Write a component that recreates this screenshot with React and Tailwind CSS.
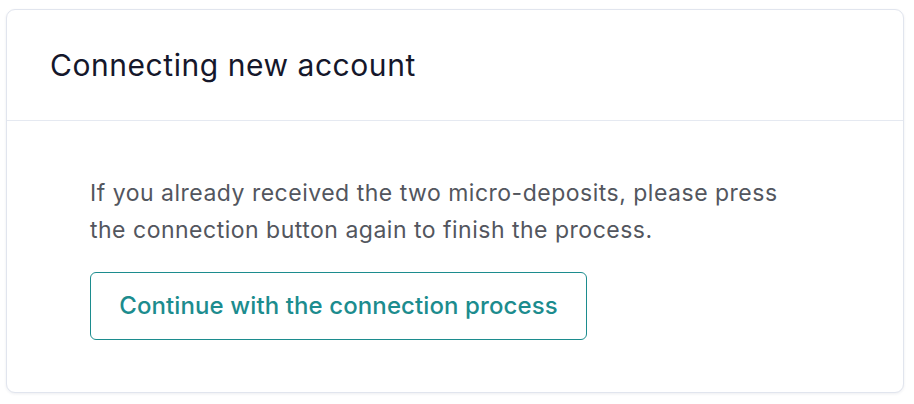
import React from "react";

export default function App() {
  return (
    <div
      className="min-h-[404px] w-full bg-white pl-[6px] pr-[10px] pt-[9px]"
      style={{ fontFamily: "Inter, 'Noto Sans', sans-serif" }}
    >
      <div className="overflow-hidden rounded-[9px] border border-[#e1e5ee] bg-white shadow-[0_1px_3px_rgba(30,40,80,0.08)]">
        {/* Header */}
        <div className="flex h-[111px] items-center border-b border-[#e5e9f1] px-[43px]">
          <h1 className="text-[30px] font-normal leading-none tracking-[0.55px] text-[#15172b]">
            Connecting new account
          </h1>
        </div>

        {/* Body */}
        <div className="px-[83px] pb-[52px] pt-[54px]">
          <p className="max-w-[720px] text-[23px] leading-[37px] tracking-[0.5px] text-[#53565e]">
            If you already received the two micro-deposits, please press the
            connection button again to finish the process.
          </p>
          <button
            type="button"
            className="mt-[23px] h-[68px] w-[497px] rounded-[6px] border-[1.5px] border-[#1c8c8e] bg-white text-[24px] font-medium tracking-[0.1px] text-[#1c8c8e]"
          >
            Continue with the connection process
          </button>
        </div>
      </div>
    </div>
  );
}
